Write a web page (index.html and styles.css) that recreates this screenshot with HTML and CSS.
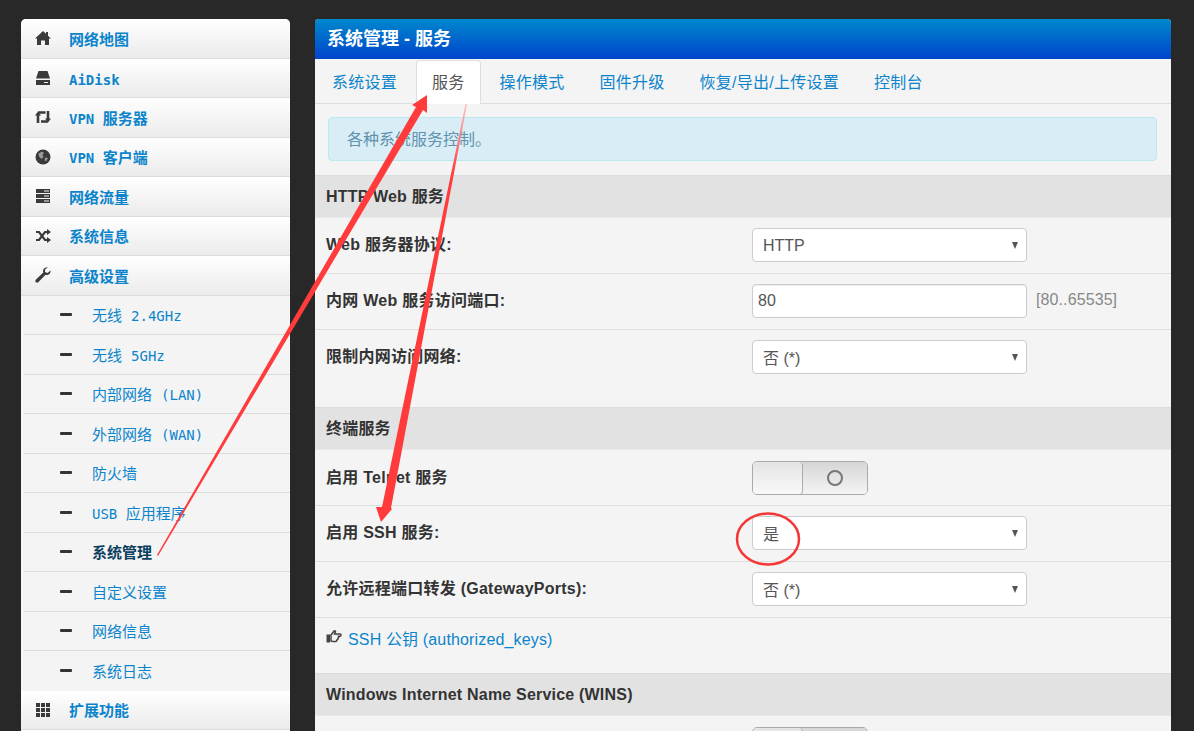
FILE: index.html
```html
<!DOCTYPE html>
<html lang="zh">
<head>
    <meta charset="UTF-8">
    <meta name="viewport" content="width=device-width, initial-scale=1.0">
    <title>系统管理 - 服务</title>
    <link rel="stylesheet" href="styles.css">
</head>
<body>
    <nav class="sidebar">
        <a class="item"><svg class="ico" viewBox="0 0 16 16"><path d="M8 1l3 2.800V2h2v3.700L16 8.500h-2V15h-4v-4.500H6V15H2V8.500H0z"/></svg><span>网络地图</span></a>
        <a class="item"><svg class="ico" viewBox="0 0 16 16"><path d="M3.500 1h9L15 8.500H1zM1 10h14v5H1zM9 12v1h4v-1z" fill-rule="evenodd"/></svg><span class="low"><span class="mono">AiDisk</span></span></a>
        <a class="item"><svg class="ico" viewBox="0 0 16 16"><path d="M3 14V5.500M3 3.500H10.500M13 2v8.500M13 12.500H6" fill="none" stroke="#3a3a3a" stroke-width="2.600"/><path d="M0 6.500l3-4 3 4zM16 9.500l-3 4-3-4z"/></svg><span><span class="mono">VPN </span>服务器</span></a>
        <a class="item"><svg class="ico" viewBox="0 0 16 16"><circle cx="8" cy="8" r="7.500"/><path d="M3.500 4.500L7 2.500 9 4 7.500 6 8.500 8 6.500 10 4 7.500zM10.500 8.500L13 9 11 12.500 9.500 11z" fill="#9a9a9a"/></svg><span><span class="mono">VPN </span>客户端</span></a>
        <a class="item"><svg class="ico" viewBox="0 0 16 16"><path d="M1 1h14v4H1zM1 6h14v4H1zM1 11h14v4H1zM9 2.500v1h5v-1zM9 7.500v1h5v-1zM9 12.500v1h5v-1z" fill-rule="evenodd"/></svg><span>网络流量</span></a>
        <a class="item"><svg class="ico" viewBox="0 0 16 16"><path d="M1 4h3l6 8h2M1 12h3l6-8h2" fill="none" stroke="#3a3a3a" stroke-width="2.200"/><path d="M12 1l4 3-4 3zM12 9l4 3-4 3z"/></svg><span>系统信息</span></a>
        <a class="item"><svg class="ico" viewBox="0 0 16 16"><path d="M15.500 3.500l-3 2.500-2.500-1 .2-2.700L13 .6C10.500-.2 8 1.500 8 4c0 .7.1 1.200.3 1.600L1 12.500c-1 1-.8 2 0 2.700.8.700 1.700.7 2.500-.2l7-7.300c2.800.8 5.500-1.200 5-4.200z"/></svg><span>高级设置</span></a>
        <a class="sub"><i class="dash"></i><span>无线 <span class="mono">2.4GHz</span></span></a>
        <a class="sub"><i class="dash"></i><span>无线 <span class="mono">5GHz</span></span></a>
        <a class="sub"><i class="dash"></i><span>内部网络 <span class="mono">(LAN)</span></span></a>
        <a class="sub"><i class="dash"></i><span>外部网络 <span class="mono">(WAN)</span></span></a>
        <a class="sub"><i class="dash"></i><span>防火墙</span></a>
        <a class="sub"><i class="dash"></i><span><span class="mono">USB </span>应用程序</span></a>
        <a class="sub current"><i class="dash"></i><span>系统管理</span></a>
        <a class="sub"><i class="dash"></i><span>自定义设置</span></a>
        <a class="sub"><i class="dash"></i><span>网络信息</span></a>
        <a class="sub last"><i class="dash"></i><span>系统日志</span></a>
        <a class="item"><svg class="ico" viewBox="0 0 16 16"><path d="M1 1h4v4H1zM6 1h4v4H6zM11 1h4v4h-4zM1 6h4v4H1zM6 6h4v4H6zM11 6h4v4h-4zM1 11h4v4H1zM6 11h4v4H6zM11 11h4v4h-4z"/></svg><span>扩展功能</span></a>
        <a class="item"></a>
    </nav>

    <main class="panel">
        <h1 class="panel-title">系统管理 - 服务</h1>
        <ul class="tabs">
            <li><a>系统设置</a></li>
            <li class="active"><a>服务</a></li>
            <li><a>操作模式</a></li>
            <li><a>固件升级</a></li>
            <li><a>恢复/导出/上传设置</a></li>
            <li><a>控制台</a></li>
        </ul>
        <div class="alert">各种系统服务控制。</div>

        <h2 class="section">HTTP Web 服务</h2>
        <div class="row">
            <label>Web 服务器协议:</label>
            <div class="select"><select><option>HTTP</option></select></div>
        </div>
        <div class="row">
            <label>内网 Web 服务访问端口:</label>
            <input class="text" type="text" value="80">
            <span class="hint">[80..65535]</span>
        </div>
        <div class="row tall">
            <label>限制内网访问网络:</label>
            <div class="select"><select class="zh"><option>否 (*)</option></select></div>
        </div>

        <h2 class="section">终端服务</h2>
        <div class="row">
            <label class="down">启用 Telnet 服务</label>
            <div class="toggle"><span class="toggle-on"></span><span class="toggle-off"><i></i></span></div>
        </div>
        <div class="row">
            <label>启用 SSH 服务:</label>
            <div class="select"><select class="zh"><option>是</option></select></div>
        </div>
        <div class="row">
            <label>允许远程端口转发 (GatewayPorts):</label>
            <div class="select"><select class="zh"><option>否 (*)</option></select></div>
        </div>
        <div class="row link-row">
            <svg class="hand" viewBox="0 0 16 13"><path d="M0.500 4.500h3.500v8H0.500z" fill="#444"/><path d="M5 5l3-4c1-.6 1.800.3 1.300 1.200L8.500 4H14c1.400 0 1.400 2.200 0 2.200h-1.500c.6.900.2 1.800-.6 2 .3.900-.2 1.700-1 1.800 0 .9-.6 1.500-1.400 1.500H6.500L5 11z" fill="none" stroke="#444" stroke-width="1.500"/></svg>
            <a class="link">SSH 公钥 (authorized_keys)</a>
        </div>

        <h2 class="section">Windows Internet Name Service (WINS)</h2>
        <div class="row">
            <label></label>
            <div class="toggle"><span class="toggle-on"></span><span class="toggle-off"><i></i></span></div>
        </div>
    </main>

    <!-- red marks drawn over the page -->
    <svg class="marks" width="1194" height="731" viewBox="0 0 1194 731">
        <defs>
            <linearGradient id="fade" gradientUnits="userSpaceOnUse" x1="0" y1="104" x2="0" y2="175">
                <stop offset="0" stop-color="#f9c4c4"/>
                <stop offset="1" stop-color="#ff3b3b"/>
            </linearGradient>
        </defs>
        <polygon fill="#ff3b3b" points="157,555 416,107 412,105 427,95 427,113 423,110 158,556"/>
        <polygon fill="url(#fade)" points="465.500,104 382,507 376,507 381,522 392,509 391,508 467,104"/>
        <ellipse cx="768" cy="539" rx="31" ry="25.500" fill="none" stroke="#f63636" stroke-width="2.500"/>
    </svg>
</body>
</html>
```

FILE: styles.css
```css
html, body {
    height: 100%;
    margin: 0;
    overflow: hidden;
}
body {
    display: flex;
    align-items: flex-start;
    gap: 25px;
    padding: 19px 0 0 21px;
    box-sizing: border-box;
    background-color: #282828;
    font-family: "Liberation Sans", "Noto Sans CJK SC", sans-serif;
    font-size: 16px;
    color: #333;
}

.sidebar {
    flex: none;
    width: 269px;
    border-radius: 5px 5px 0 0;
    overflow: hidden;
    background-color: #f4f4f4;
    font-family: "DejaVu Sans Mono", "Noto Sans CJK SC", monospace;
    font-size: 15px;
    color: #0b84cc;
}
.mono {
    font-size: 14px;
}
.item, .sub {
    display: flex;
    align-items: center;
    height: 39.5px;
    box-sizing: border-box;
    border-bottom: 1px solid #dcdcdc;
}
.item {
    padding-left: 14px;
    gap: 18px;
    font-weight: bold;
    background: linear-gradient(#fff, #ebebeb);
}
.item span, .sub span {
    white-space: pre;
}
.item .low {
    padding-top: 4px;
}
.ico {
    flex: none;
    width: 16px;
    height: 16px;
    fill: #3a3a3a;
}
.sub {
    margin-left: 3px;
    padding-left: 36px;
    gap: 20px;
}
.sub.current {
    font-weight: bold;
    color: #0a3f5f;
}
.sub.last {
    border-bottom: none;
}
.dash {
    flex: none;
    width: 12px;
    height: 3px;
    border-radius: 1px;
    background-color: #333;
}

.panel {
    flex: none;
    width: 856px;
    border-radius: 4px 4px 0 0;
    overflow: hidden;
    background-color: #f4f4f4;
}
.panel-title {
    margin: 0;
    height: 40px;
    padding-left: 12px;
    line-height: 40px;
    font-size: 18px;
    color: #fff;
    background: linear-gradient(#0088cc, #0044cc);
}
.tabs {
    display: flex;
    gap: 3px;
    height: 45px;
    margin: 0;
    padding: 1px 0 0 1px;
    box-sizing: border-box;
    list-style: none;
    border-bottom: 1px solid #ddd;
    letter-spacing: 0.25px;
    color: #0b84cc;
}
.tabs a {
    display: block;
    height: 44px;
    padding: 0 16px;
    box-sizing: border-box;
    line-height: 46px;
}
.tabs .active a {
    padding: 0 15px;
    border: 1px solid #ddd;
    border-bottom: none;
    border-radius: 4px 4px 0 0;
    background-color: #fff;
    color: #555;
    line-height: 44px;
}
.alert {
    margin: 13px 14px 14px 13px;
    height: 44px;
    padding-left: 18px;
    box-sizing: border-box;
    border: 1px solid #bce8f1;
    border-radius: 4px;
    background-color: #d9edf7;
    line-height: 43px;
    color: #5f93ad;
}
.section {
    margin: 0;
    height: 43px;
    padding-left: 11px;
    box-sizing: border-box;
    border-top: 1px solid #dcdcdc;
    border-bottom: 1px solid #e8e8e8;
    background-color: #e2e2e2;
    line-height: 41px;
    font-size: 16px;
    letter-spacing: 0.2px;
}
.row {
    display: flex;
    align-items: flex-start;
    height: 56px;
    padding: 10px 0 0 11px;
    box-sizing: border-box;
    border-bottom: 1px solid #ddd;
}
.row.tall {
    height: 77px;
    border-bottom: none;
}
.row label {
    flex: none;
    width: 426px;
    font-weight: bold;
    line-height: 34px;
    letter-spacing: 0.25px;
}
.row label.down {
    line-height: 36px;
}
.select {
    position: relative;
    width: 275px;
    height: 34px;
}
.select select {
    width: 100%;
    height: 100%;
    padding: 0 10px;
    border: 1px solid #ccc;
    border-radius: 4px;
    background-color: #fff;
    font: inherit;
    color: #555;
    appearance: none;
}
.select select.zh {
    padding-top: 2px;
}
/* little arrow of the select box */
.select::after {
    content: "";
    position: absolute;
    top: 14px;
    right: 9px;
    border-top: 7px solid #555;
    border-left: 3px solid transparent;
    border-right: 3px solid transparent;
}
.text {
    width: 275px;
    height: 34px;
    padding: 0 5px;
    box-sizing: border-box;
    border: 1px solid #ccc;
    border-radius: 4px;
    box-shadow: inset 0 1px 1px rgba(0, 0, 0, 0.075);
    font: inherit;
    color: #555;
}
.hint {
    margin-left: 9px;
    line-height: 32px;
    letter-spacing: 0.1px;
    color: #888;
}
.toggle {
    display: flex;
    width: 116px;
    height: 34px;
    margin-top: 1px;
    box-sizing: border-box;
    border: 1px solid #aaa;
    border-radius: 5px;
    overflow: hidden;
}
.toggle-on {
    flex: none;
    width: 49px;
    border-right: 1px solid #aaa;
    border-radius: 0 4px 4px 0;
    background: linear-gradient(#e4e4e4, #f9f9f9);
    box-shadow: 1px 0 2px rgba(0, 0, 0, 0.25);
}
.toggle-off {
    flex: 1;
    display: flex;
    align-items: center;
    justify-content: center;
    background: linear-gradient(#d6d6d6, #f4f4f4);
}
.toggle-off i {
    width: 12px;
    height: 12px;
    border: 2px solid #777;
    border-radius: 50%;
}
.link-row {
    align-items: flex-start;
    padding-top: 8px;
    border-bottom: none;
    height: 55px;
}
.hand {
    flex: none;
    width: 16px;
    height: 13px;
    margin: 4px 6px 0 0;
}
.link {
    letter-spacing: 0.15px;
    color: #0b84cc;
}

.marks {
    position: absolute;
    top: 0;
    left: 0;
    pointer-events: none;
}
```
